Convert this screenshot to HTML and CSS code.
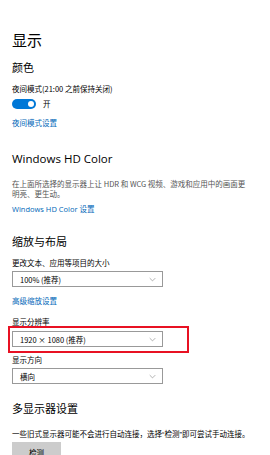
FILE: index.html
```html
<!DOCTYPE html>
<html lang="zh-CN">
<head>
    <meta charset="UTF-8">
    <title>显示</title>
    <link rel="stylesheet" href="styles.css">
</head>
<body>

<div class="page">
    <h1 class="title">显示</h1>

    <h2 class="heading heading-first">颜色</h2>
    <p class="label">夜间模式(21:00 之前保持关闭)</p>
    <div class="toggle-row">
        <span class="toggle"><span class="knob"></span></span>
        <span class="toggle-text">开</span>
    </div>
    <a class="link" href="#">夜间模式设置</a>

    <h2 class="heading heading-latin">Windows HD Color</h2>
    <p class="desc">在上面所选择的显示器上让 HDR 和 WCG 视频、游戏和应用中的画面更<br>明亮、更生动。</p>
    <a class="link link-hd" href="#">Windows HD Color 设置</a>

    <h2 class="heading heading-scale">缩放与布局</h2>
    <p class="label">更改文本、应用等项目的大小</p>
    <div class="select">
        <span>100% (推荐)</span>
        <svg class="chevron" viewBox="0 0 10 6"><path d="M1 1l4 4 4-4" fill="none" stroke="#777" stroke-width="0.8"/></svg>
    </div>
    <a class="link link-scale" href="#">高级缩放设置</a>

    <p class="label label-res">显示分辨率</p>
    <div class="highlight">
        <div class="select">
            <span>1920 × 1080 (推荐)</span>
            <svg class="chevron" viewBox="0 0 10 6"><path d="M1 1l4 4 4-4" fill="none" stroke="#777" stroke-width="0.8"/></svg>
        </div>
    </div>
    <p class="label label-dir">显示方向</p>
    <div class="select">
        <span>横向</span>
        <svg class="chevron" viewBox="0 0 10 6"><path d="M1 1l4 4 4-4" fill="none" stroke="#777" stroke-width="0.8"/></svg>
    </div>

    <h2 class="heading heading-multi">多显示器设置</h2>
    <p class="label label-multi">一些旧式显示器可能不会进行自动连接，选择“检测”即可尝试手动连接。</p>
    <button class="btn">检测</button>
</div>

</body>
</html>
```

FILE: styles.css
```css
body {
    margin: 0;
    padding: 0;
    background-color: #ffffff;
    font-family: "Noto Sans CJK SC", "Liberation Sans", sans-serif;
    color: #000000;
    overflow: hidden;
}

.page {
    display: flex;
    flex-direction: column;
    align-items: flex-start;
    padding: 32px 16px 0 12px;
}

.title {
    margin: 0;
    font-size: 15px;
    line-height: 15px;
    font-weight: normal;
}

.heading {
    margin: 0;
    font-size: 11px;
    line-height: 11px;
    font-weight: normal;
}

.heading-first {
    margin-top: 15px;
}

.heading-latin {
    margin-top: 26px;
    font-family: "Open Sans", "Liberation Sans", sans-serif;
    font-size: 11.5px;
    line-height: 12px;
}

.heading-scale {
    margin-top: 23px;
}

.heading-multi {
    margin-top: 19px;
}

.label {
    margin: 12px 0 0 0;
    font-size: 7.5px;
    line-height: 8px;
}

.label-res {
    margin-top: 13px;
}

.label-dir {
    margin-top: 3px;
}

.label-multi {
    margin-top: 17px;
    font-family: "Liberation Sans", "Noto Sans CJK SC", sans-serif;
    white-space: nowrap;
}

.toggle-row {
    display: flex;
    align-items: center;
    gap: 7px;
    margin-top: 6px;
}

.toggle {
    display: flex;
    align-items: center;
    justify-content: flex-end;
    width: 24px;
    height: 10px;
    padding: 0 2px;
    box-sizing: border-box;
    border-radius: 5px;
    background-color: #0078d7;
}

.toggle .knob {
    width: 6px;
    height: 6px;
    border-radius: 50%;
    background-color: #ffffff;
}

.toggle-text {
    font-size: 7.5px;
    line-height: 8px;
}

.link {
    margin-top: 10px;
    font-size: 7.5px;
    line-height: 8px;
    color: #0067b8;
    text-decoration: none;
}

.link-hd {
    margin-top: 6px;
    font-family: "Open Sans", "Noto Sans CJK SC", sans-serif;
}

.link-scale {
    margin-top: 10px;
}

.desc {
    margin: 14px 0 0 0;
    font-size: 7.5px;
    line-height: 10px;
    color: #555555;
}

.select {
    display: flex;
    align-items: center;
    justify-content: space-between;
    width: 151px;
    height: 16px;
    margin-top: 4px;
    padding: 0 6px 0 7px;
    box-sizing: border-box;
    border: 1px solid #999999;
    font-size: 7.5px;
    background-color: #ffffff;
}

.chevron {
    width: 7px;
    height: 5px;
}

.highlight {
    margin: 0 0 0 -4px;
    padding: 3px 24px 4px 2px;
    border: 2px solid #e81123;
}

.highlight .select {
    margin-top: 0;
}

.btn {
    margin-top: 3px;
    width: 49px;
    height: 20px;
    border: none;
    background-color: #cccccc;
    font-family: "Noto Sans CJK SC", sans-serif;
    font-size: 7.5px;
    padding: 0;
}
```
